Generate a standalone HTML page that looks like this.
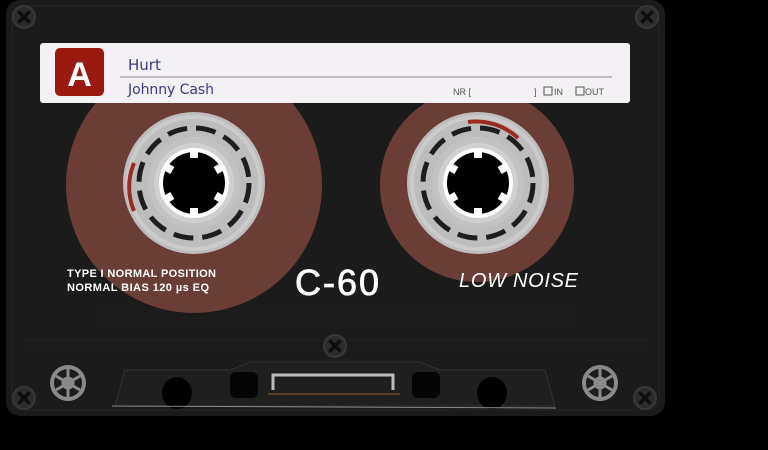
<!DOCTYPE html>
<html><head><meta charset="utf-8"><style>
html,body{margin:0;padding:0;background:#000;width:768px;height:450px;overflow:hidden}
svg{display:block}
</style></head><body>
<svg width="768" height="450" viewBox="0 0 768 450" xmlns="http://www.w3.org/2000/svg" font-family="Liberation Sans, sans-serif">
<defs>
<g id="screw"><circle r="11" fill="#2c2c2c" stroke="#383838" stroke-width="2"/><path d="M-4.5,-4.5 L4.5,4.5 M4.5,-4.5 L-4.5,4.5" stroke="#0e0e0e" stroke-width="3.5" stroke-linecap="round"/></g>
<g id="reel">
<circle r="71" fill="#bdbdbd"/>
<circle r="66" fill="none" stroke="#cbcbcb" stroke-width="4"/>
<circle r="55" fill="none" stroke="#1e1e1e" stroke-width="5" stroke-dasharray="20 9"/>
<circle r="46" fill="#c2c2c2"/>
<circle r="40" fill="#d0d0d0"/>
<circle r="35" fill="#fff"/>
<circle r="31" fill="#000"/>
<g fill="#fff"><rect x="-4" y="-33" width="8" height="8"/><rect x="-4" y="-33" width="8" height="8" transform="rotate(60)"/><rect x="-4" y="-33" width="8" height="8" transform="rotate(120)"/><rect x="-4" y="-33" width="8" height="8" transform="rotate(180)"/><rect x="-4" y="-33" width="8" height="8" transform="rotate(240)"/><rect x="-4" y="-33" width="8" height="8" transform="rotate(300)"/></g>
</g>
<g id="gear"><circle r="16" fill="none" stroke="#8a8a8a" stroke-width="4"/><circle r="5" fill="none" stroke="#8a8a8a" stroke-width="3"/><g stroke="#8a8a8a" stroke-width="3"><line x1="0" y1="-14" x2="0" y2="14"/><line x1="-12" y1="-7" x2="12" y2="7"/><line x1="-12" y1="7" x2="12" y2="-7"/></g></g>
</defs>
<rect width="768" height="450" fill="#000"/>
<rect x="6" y="0" width="659" height="416" rx="14" fill="#1b1b1b"/>
<rect x="12" y="6" width="647" height="404" rx="10" fill="none" stroke="#262626"/>
<g stroke="#202020" stroke-width="1">
<line x1="90" y1="310" x2="580" y2="310"/><line x1="90" y1="318" x2="580" y2="318"/><line x1="90" y1="326" x2="580" y2="326"/><line x1="20" y1="340" x2="650" y2="340"/><line x1="20" y1="350" x2="650" y2="350"/><line x1="20" y1="360" x2="650" y2="360"/>
</g>
<path d="M115,406 L125,370 L230,370 L250,362 L420,362 L440,370 L545,370 L555,406 Z" fill="#1f1f1f" stroke="#333"/>
<circle cx="194" cy="185" r="128" fill="#6b3d37"/>
<circle cx="477" cy="185" r="97" fill="#6b3d37"/>
<use href="#reel" x="194" y="183"/>
<use href="#reel" x="478" y="183"/>
<path d="M134,163 A62,62 0 0 0 134,211" fill="none" stroke="#9a2a22" stroke-width="4"/>
<path d="M468,122 A62,62 0 0 1 518,138" fill="none" stroke="#9a2a22" stroke-width="4"/>
<rect x="40" y="43" width="590" height="60" rx="3" fill="#f4f1f4"/>
<rect x="55" y="48" width="49" height="48" rx="5" fill="#9b1a10"/>
<text x="79.5" y="86" text-anchor="middle" font-size="34" font-weight="bold" fill="#fff">A</text>
<text x="128" y="70" font-size="15" fill="#3a3a85" font-family="DejaVu Sans, sans-serif">Hurt</text>
<line x1="120" y1="77" x2="612" y2="77" stroke="#888" stroke-width="1"/>
<text x="128" y="94" font-size="14" fill="#3a3a85" font-family="DejaVu Sans, sans-serif" textLength="86">Johnny Cash</text>
<text x="453" y="95" font-size="9" fill="#555">NR [</text>
<text x="534" y="95" font-size="9" fill="#555">]</text>
<rect x="544" y="87" width="8" height="8" fill="none" stroke="#555"/><text x="554" y="95" font-size="9" fill="#555">IN</text>
<rect x="576" y="87" width="8" height="8" fill="none" stroke="#555"/><text x="585" y="95" font-size="9" fill="#555">OUT</text>
<text x="67" y="277" font-size="11" font-weight="bold" fill="#fff" textLength="149">TYPE I NORMAL POSITION</text>
<text x="67" y="291" font-size="11" font-weight="bold" fill="#fff" textLength="142">NORMAL BIAS 120 µs EQ</text>
<text x="295" y="295" font-size="36" fill="#fff" stroke="#fff" stroke-width="0.8" textLength="84">C-60</text>
<text x="459" y="287" font-size="20" font-style="italic" fill="#fff" textLength="119">LOW NOISE</text>
<use href="#screw" x="24" y="17"/><use href="#screw" x="647" y="17"/>
<use href="#screw" x="24" y="398"/><use href="#screw" x="645" y="398"/>
<use href="#screw" x="335" y="346"/>
<use href="#gear" x="68" y="383"/><use href="#gear" x="600" y="383"/>
<ellipse cx="177" cy="393" rx="15" ry="16" fill="#000"/>
<ellipse cx="492" cy="393" rx="15" ry="16" fill="#000"/>
<rect x="230" y="372" width="28" height="26" rx="6" fill="#050505"/>
<rect x="412" y="372" width="28" height="26" rx="6" fill="#050505"/>
<path d="M273,390 L273,375 L393,375 L393,390" fill="none" stroke="#bbb" stroke-width="3"/>
<line x1="268" y1="394" x2="400" y2="394" stroke="#6b4a2a" stroke-width="1.5"/>
<line x1="112" y1="406" x2="556" y2="408" stroke="#888" stroke-width="1"/>
</svg>
</body></html>
